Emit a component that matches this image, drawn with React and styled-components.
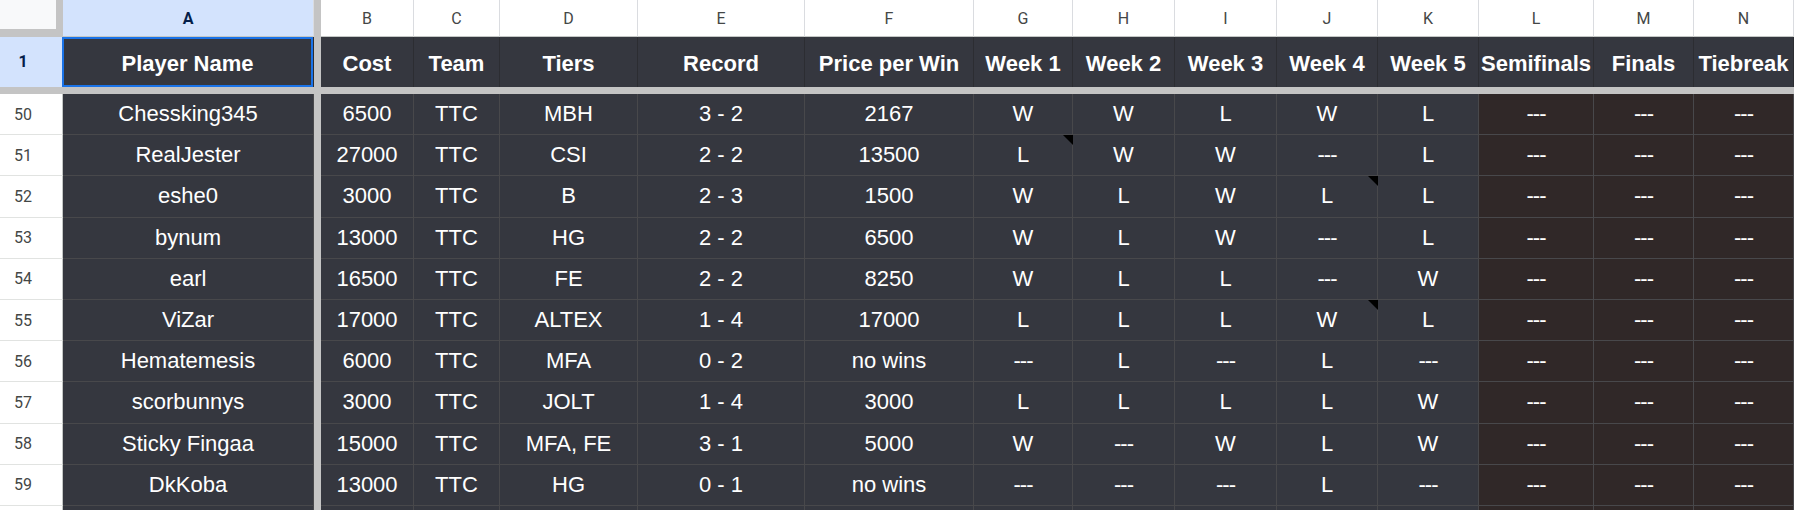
import React from 'react'
import styled, { createGlobalStyle } from 'styled-components'

const GlobalStyle = createGlobalStyle`
  html, body {
    margin: 0;
    padding: 0;
    background: #ffffff;
    overflow: hidden;
  }
  * {
    box-sizing: border-box;
  }
`

const letters = ['A', 'B', 'C', 'D', 'E', 'F', 'G', 'H', 'I', 'J', 'K', 'L', 'M', 'N']
const widths = [251, 93, 86, 138, 167, 169, 99, 102, 102, 101, 101, 115, 100, 100]
const headers = [
  'Player Name', 'Cost', 'Team', 'Tiers', 'Record', 'Price per Win',
  'Week 1', 'Week 2', 'Week 3', 'Week 4', 'Week 5', 'Semifinals', 'Finals', 'Tiebreak'
]

const D = '---'
const rows = [
  { n: 50, cells: ['Chessking345', '6500', 'TTC', 'MBH', '3 - 2', '2167', 'W', 'W', 'L', 'W', 'L'] },
  { n: 51, cells: ['RealJester', '27000', 'TTC', 'CSI', '2 - 2', '13500', 'L', 'W', 'W', D, 'L'], notes: [6] },
  { n: 52, cells: ['eshe0', '3000', 'TTC', 'B', '2 - 3', '1500', 'W', 'L', 'W', 'L', 'L'], notes: [9] },
  { n: 53, cells: ['bynum', '13000', 'TTC', 'HG', '2 - 2', '6500', 'W', 'L', 'W', D, 'L'] },
  { n: 54, cells: ['earl', '16500', 'TTC', 'FE', '2 - 2', '8250', 'W', 'L', 'L', D, 'W'] },
  { n: 55, cells: ['ViZar', '17000', 'TTC', 'ALTEX', '1 - 4', '17000', 'L', 'L', 'L', 'W', 'L'], notes: [9] },
  { n: 56, cells: ['Hematemesis', '6000', 'TTC', 'MFA', '0 - 2', 'no wins', D, 'L', D, 'L', D] },
  { n: 57, cells: ['scorbunnys', '3000', 'TTC', 'JOLT', '1 - 4', '3000', 'L', 'L', 'L', 'L', 'W'] },
  { n: 58, cells: ['Sticky Fingaa', '15000', 'TTC', 'MFA, FE', '3 - 1', '5000', 'W', D, 'W', 'L', 'W'] },
  { n: 59, cells: ['DkKoba', '13000', 'TTC', 'HG', '0 - 1', 'no wins', D, D, D, 'L', D] },
  // row 60 is only a sliver at the bottom edge, nothing readable in it
  { n: '', cells: ['', '', '', '', '', '', '', '', '', '', ''], empty: true },
]

const App = () => {
  return (
    <>
      <GlobalStyle />
      <Viewport>
        <Sheet>
          <FrozenCol />
          <FrozenRow />

          <Corner />
          {letters.map((l, i) => (
            <ColLetter key={l} selected={i === 0}>{l}</ColLetter>
          ))}

          <RowNum selected>1</RowNum>
          {headers.map((h, i) => (
            <HeadCell key={h} selected={i === 0}>{h}</HeadCell>
          ))}

          {rows.map((r, ri) => (
            <React.Fragment key={ri}>
              <RowNum>{r.n}</RowNum>
              {r.cells.map((c, i) => (
                <Cell key={i} dash={c === D}>
                  {c}
                  {r.notes && r.notes.includes(i) && <NoteMark />}
                </Cell>
              ))}
              {[0, 1, 2].map(i => (
                <Cell key={'p' + i} playoff dash>{r.empty ? '' : D}</Cell>
              ))}
            </React.Fragment>
          ))}
        </Sheet>
      </Viewport>
    </>
  )
}

export default App

const Viewport = styled.div`
  width: 1794px;
  height: 510px;
  overflow: hidden;
  background: #ffffff;
`

const Sheet = styled.div`
  display: grid;
  grid-template-columns: 63px ${widths[0]}px 7px ${widths.slice(1).map(w => w + 'px').join(' ')};
  grid-template-rows: 37px 50px 7px repeat(11, 41.2px);
  font-family: 'Liberation Sans', Arial, sans-serif;
`

const FrozenCol = styled.div`
  grid-column: 3;
  grid-row: 1 / -1;
  background: #c4c4c4;
`

const FrozenRow = styled.div`
  grid-row: 3;
  grid-column: 1 / -1;
  background: #c4c4c4;
`

const Corner = styled.div`
  background: #f8f9fa;
  border-right: 7px solid #c4c4c4;
  border-bottom: 8px solid #c4c4c4;
`

const ColLetter = styled.div`
  display: flex;
  align-items: center;
  justify-content: center;
  background: ${p => (p.selected ? '#d3e3fd' : '#ffffff')};
  color: ${p => (p.selected ? '#041e49' : '#444746')};
  font-family: Roboto, 'Liberation Sans', sans-serif;
  font-weight: ${p => (p.selected ? 700 : 400)};
  font-size: 16px;
  border-right: 1px solid #dadce0;
  border-bottom: 1px solid #c4c7c5;
`

const RowNum = styled.div`
  display: flex;
  align-items: center;
  justify-content: center;
  padding-right: 16px;
  background: ${p => (p.selected ? '#d3e3fd' : '#ffffff')};
  color: ${p => (p.selected ? '#041e49' : '#444746')};
  font-family: Roboto, 'Liberation Sans', sans-serif;
  font-weight: ${p => (p.selected ? 700 : 400)};
  font-size: 16px;
  border-right: 1px solid #c4c7c5;
  border-bottom: 1px solid ${p => (p.selected ? '#d3e3fd' : '#e1e3e1')};
`

const HeadCell = styled.div`
  display: flex;
  align-items: center;
  justify-content: center;
  padding-top: 3px;
  background: #35373f;
  color: #ffffff;
  font-size: 22px;
  font-weight: 700;
  white-space: nowrap;
  overflow: hidden;
  border-right: 1px solid #2c2d32;
  box-shadow: ${p => (p.selected ? 'inset 0 0 0 2px #1a73e8' : 'none')};
  margin-left: ${p => (p.selected ? '-1px' : '0')};
`

const Cell = styled.div`
  position: relative;
  display: flex;
  align-items: center;
  justify-content: center;
  background: ${p => (p.playoff ? '#302828' : '#35373f')};
  color: #ffffff;
  font-size: 22px;
  letter-spacing: ${p => (p.dash ? '-1px' : 'normal')};
  white-space: nowrap;
  overflow: visible;
  border-right: 1px solid #48484b;
  border-bottom: 1px solid #48484b;
`

const NoteMark = styled.span`
  position: absolute;
  top: 0;
  right: -1px;
  width: 0;
  height: 0;
  border-top: 10px solid #000000;
  border-left: 10px solid transparent;
`
